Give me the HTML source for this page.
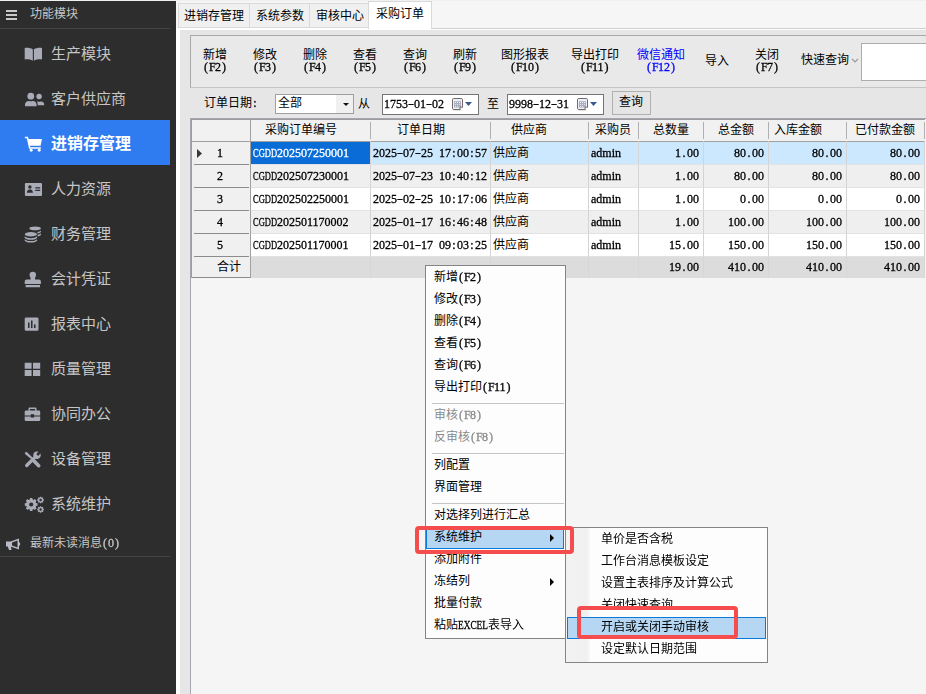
<!DOCTYPE html>
<html lang="zh-CN">
<head>
<meta charset="utf-8">
<title>采购订单</title>
<style>

*{box-sizing:border-box}
html,body{margin:0;padding:0}
html,body{width:926px;height:694px;overflow:hidden}
body{background:#e6e6e6;color:#000;font:12px/12px "Liberation Serif",serif}
#app{position:relative;width:926px;height:694px;overflow:hidden;background:#e6e6e6}
/* ---- text primitives ---- */
.tx{display:inline-flex;align-items:flex-start;height:12px;line-height:12px;white-space:nowrap;
  font:12px/12px "Liberation Serif",serif;vertical-align:top}
.tx .a{display:block;height:12px;line-height:12px;will-change:transform;position:relative;top:-1px;-webkit-text-stroke:.3px currentColor}
.tx .p{display:inline-block;width:6px;text-align:center;white-space:pre}
.tx .p.h{transform:scaleX(1.5)}
.tx .q{display:inline-block;white-space:nowrap}
.tx .q>span{display:inline-block;transform-origin:0 0}
.tx .c{display:block;flex:none;height:12px;line-height:12px;font:12px/12px "Liberation Sans","Noto Sans CJK SC",sans-serif;white-space:nowrap;position:relative;top:-1px}
.abs{position:absolute}
.topline{position:absolute;left:0;top:0;width:926px;height:1px;background:#f0f0f0;z-index:5}

/* ---- sidebar ---- */
.side{position:absolute;left:0;top:0;width:176px;height:694px;background:#2d2d2d;color:#c6c6c6}
.side .sh{position:absolute;left:0;top:0;width:170px;height:29px;border-bottom:1px solid #454545}
.side .sh .ic{position:absolute;left:6px;top:10px;fill:#cacaca}
.side .sh .tx{position:absolute;left:30px;top:9px}
.nav{position:absolute;left:0;top:30px;width:170px;margin:0;padding:0;list-style:none}
.nav li{position:relative;height:45px}
.nav li .ic{position:absolute;left:23px;top:14px;fill:#a9abb7}
.ic .st{fill:none;stroke:#a9abb7;stroke-linecap:round}
.nav li .ol{position:absolute;left:51px;top:16px;height:15px;font:15px/15px "Liberation Sans","Noto Sans CJK SC",sans-serif;white-space:nowrap}
.nav li.on{background:#2f7bf0;color:#fff}
.nav li.on .ol{top:16px;height:16px;font-size:16px;line-height:16px;font-weight:bold}
.nav li.on .ic{fill:#fff}
.side .msg{position:absolute;left:0;top:531px;width:170px;height:26px;border-bottom:1px solid #454545}
.side .msg .ic{position:absolute;left:5px;top:6px;fill:#b9bcc8}
.side .msg .tx{position:absolute;left:30px;top:7px}

/* ---- tab strip ---- */
.strip{position:absolute;left:176px;top:0;width:750px;height:28px;background:#f6f6f6}
.edge-t{position:absolute;left:176px;top:28px;width:750px;height:2px;background:#fff}
.edge-t:before{content:"";position:absolute;left:256px;right:0;top:0;height:1px;background:#d0d0d0}
.edge-l{position:absolute;left:176px;top:28px;width:4px;height:666px;background:#fff}
.tab{position:absolute;top:3px;height:25px;background:#f0f0f0;border:1px solid #d9d9d9;padding-top:7px}
.tab.on{top:1px;height:28px;background:#fff;border-bottom:0;padding-top:7px;z-index:2}

/* ---- toolbar ---- */
.toolbar{position:absolute;left:190px;top:35px;width:740px;height:53px;border:1px solid #a9a9a9;border-bottom-color:#c4c4c4;background:#e9e9e9}
.tb{position:absolute;text-align:center}
.tb .tx{display:flex;justify-content:center}
.tb.blue{color:#00f}
.qs{position:absolute;left:670px;top:7px;width:80px;height:38px;background:#fff;border:1px solid #adadad}

/* ---- filter row ---- */
.filter{position:absolute;left:190px;top:88px;width:736px;height:30px}
.filter>*{position:absolute}
.box{background:#fff;border:1px solid #747474;height:21px;top:6px}
.box.combo{border-color:#a0a0a0;height:20px}
.box.combo .tx{left:2px}
.box.date .tx{top:4px}
.box .tx{position:absolute;top:3px;left:1px}
.combo .dd{position:absolute;right:0;top:0;width:17px;height:18px;background:#f0f0f0}
.btn{background:#e5e5e5;border:1px solid #b0b0b0}

/* ---- grid ---- */
.grid{position:absolute;left:190px;top:118px;width:740px;height:580px;border:1px solid #a4a7ad;background:#f5f5f5}
table.g{position:absolute;left:0;top:0;border-collapse:separate;border-spacing:0;table-layout:fixed;width:734px;border-left:1px solid #9c9c9c;border-top:1px solid #9c9c9c}
table.g th,table.g td{padding:0;font-weight:normal;white-space:nowrap;overflow:hidden;text-align:left;vertical-align:top;border-right:1px solid #d4d4d4}
table.g th{height:22px;overflow:visible;background:#f1f1f1;border-bottom:1px solid #a0a0a0;border-right-color:transparent;padding-top:5px;position:relative}
table.g th:after{content:"";position:absolute;right:-1px;top:2px;bottom:2px;width:1px;background:#b0b0b0}
table.g th.ind:after{top:0;bottom:-1px;background:#a0a0a0}
table.g td{height:23px;padding:6px 0 0 2px;border-bottom:1px solid #e2e2e2;background:#fff}
table.g tr.alt td{background:#efefef}
table.g tr.sel td{background:#cce8ff}
table.g td.num{text-align:right;padding-right:4px;padding-left:0}
table.g td.ind,table.g tr.alt td.ind,table.g tr.sel td.ind,table.g tr.sum td.ind{background:#f0f0f0;border-right-color:#a0a0a0;border-bottom:0;position:relative;padding-left:25px}
table.g td.ind:after{content:"";position:absolute;left:2px;right:1px;bottom:0;height:1px;background:#8c8c8c}
table.g tr.sel td.cur{background:#0a6dd7;color:#fff}
table.g tr.sum td.ind:after{left:0;right:0}
table.g tr.sum td{height:21px;background:#dcdcdc;border-bottom:0;border-right-color:#d6d6d6;padding-top:5px}
.ptr{position:absolute;left:5px;top:7px}

/* ---- popup menus ---- */
.menu{position:absolute;background:#fdfdfd;border:1px solid #848484;margin:0;padding:1px 0 0;list-style:none}
.menu li{position:relative;height:22px;padding:5px 0 0 8px;margin-right:1px}
.menu li.sep{height:6px;padding:0}
.menu li.sep:after{content:"";position:absolute;left:6px;right:0;top:4px;height:1px;background:#c4c4c4}
.menu li.dis{color:#8a8a8a}
.menu li.hot{background:#b5d7f3;outline:1px solid #0a7ad8;outline-offset:-1px}
.menu li.more:after{content:"";position:absolute;left:124px;top:7px;border-left:4px solid #000;border-top:4px solid transparent;border-bottom:4px solid transparent}
.menu.sub{padding:1px 0;background:linear-gradient(90deg,#f2f2f2 0,#f0f0f0 21px,#fdfdfd 25px)}
.menu.sub li{padding-left:34px;margin:0 1px}
.mark{position:absolute;border:4px solid #f54d4d;border-radius:4px;z-index:9}

</style>
</head>
<body>
<div id="app">
<div class="topline"></div>
<div class="side">
<div class="sh"><svg class="ic" width="11" height="10" viewBox="0 0 11 10"><path d="M0 0h11v2H0zM0 4h11v2H0zM0 8h11v2H0z"/></svg><span class="tx"><span class="c">功能模块</span></span></div>
<ul class="nav">
<li><svg class="ic" width="22" height="20" viewBox="0 0 22 20"><path d="M1.7 3.9c2.9-.4 5.9.1 8.1 1.4v11.5c-2.2-1.3-5.2-1.7-8.1-1.4zM19 3.9c-2.9-.4-5.9.1-8.1 1.4v11.5c2.2-1.3 5.2-1.7 8.1-1.4z"/></svg><span class="ol">生产模块</span></li>
<li><svg class="ic" width="22" height="20" viewBox="0 0 22 20"><circle cx="7.8" cy="7.2" r="3.4"/><circle cx="16.1" cy="7.5" r="2.7"/><path d="M2 17.2v-1.7c0-2.1 1.7-3.6 3.7-3.6h.5c1 .5 2.2.5 3.2 0h.5c2 0 3.7 1.5 3.7 3.6v1.7zM14.7 16.2v-1.1c0-1-.3-1.9-.9-2.6h.9c.9.4 1.9.4 2.8 0h.6c1.7 0 3.1 1.2 3.1 2.8v.9z"/></svg><span class="ol">客户供应商</span></li>
<li class="on"><svg class="ic" width="22" height="20" viewBox="0 0 22 20"><path d="M1.9 2.7h3.1l.5 2.2H19l-1.4 6.8H7l.3 1.5h10.5v1.5H6.1L3.8 4.2H1.9z"/><circle cx="8.2" cy="16.2" r="1.45"/><circle cx="16.2" cy="16.2" r="1.45"/></svg><span class="ol">进销存管理</span></li>
<li><svg class="ic" width="22" height="20" viewBox="0 0 22 20"><path fill-rule="evenodd" d="M2.9 4H18a1 1 0 0 1 1 1v11a1 1 0 0 1-1 1H2.9a1 1 0 0 1-1-1V5a1 1 0 0 1 1-1zM6.9 6.3a1.7 1.7 0 1 0 0 3.4a1.7 1.7 0 1 0 0-3.4zM3.9 13.7c0-2 1.1-3.3 2.4-3.3c.4.2.8.2 1.2 0c1.3 0 2.4 1.3 2.4 3.3zM12.3 8.3h4.9v1.1h-4.9zM12.3 10.8h4.9v1.1h-4.9z"/></svg><span class="ol">人力资源</span></li>
<li><svg class="ic" width="22" height="20" viewBox="0 0 22 20"><ellipse cx="12.1" cy="4.4" rx="5.8" ry="1.9"/><path d="M14.4 7.9c1.5-.2 2.8-.7 3.5-1.4v1.6c-.7.7-2 1.2-3.5 1.4zM14.6 10.7c1.4-.2 2.6-.7 3.3-1.4v1.6c-.7.7-1.9 1.2-3.3 1.4z"/><ellipse cx="7.9" cy="10.2" rx="6.2" ry="2.2"/><path d="M1.7 12.3c1.2 1.2 3.5 1.9 6.2 1.9s5-.7 6.2-1.9v1.6c-1.2 1.2-3.5 1.9-6.2 1.9s-5-.7-6.2-1.9zM1.7 15.2c1.2 1.2 3.5 1.9 6.2 1.9s5-.7 6.2-1.9v1.5c-1.2 1.2-3.5 1.9-6.2 1.9s-5-.7-6.2-1.9z"/></svg><span class="ol">财务管理</span></li>
<li><svg class="ic" width="22" height="20" viewBox="0 0 22 20"><path d="M9.8 2.7c1.9 0 3.3 1.3 3.3 3c0 1.5-1.1 2.3-1.1 3.7v1.1h3.9c1.1 0 2 .9 2 2v2.5H1.7v-2.5c0-1.1.9-2 2-2h3.9V9.4c0-1.4-1.1-2.2-1.1-3.7c0-1.7 1.4-3 3.3-3zM2.6 16h14.4v2.2H2.6z"/></svg><span class="ol">会计凭证</span></li>
<li><svg class="ic" width="22" height="20" viewBox="0 0 22 20"><path fill-rule="evenodd" d="M3 3.6h11.2a1.3 1.3 0 0 1 1.3 1.3v10.6a1.3 1.3 0 0 1-1.3 1.3H3a1.3 1.3 0 0 1-1.3-1.3V4.9A1.3 1.3 0 0 1 3 3.6zM5 8.5v5.5h1.5V8.5zM8 6.5V14h1.5V6.5zM11 10.5V14h1.5v-3.5z"/></svg><span class="ol">报表中心</span></li>
<li><svg class="ic" width="22" height="20" viewBox="0 0 22 20"><path d="M1.7 3.8h6.9v5.9H1.7zM10 3.8h7.2v5.9H10zM1.7 11h6.9v6H1.7zM10 11h7.2v6H10z"/></svg><span class="ol">质量管理</span></li>
<li><svg class="ic" width="22" height="20" viewBox="0 0 22 20"><path fill-rule="evenodd" d="M6.5 3.6h6a1 1 0 0 1 1 1v1.9h2.5a1.2 1.2 0 0 1 1.2 1.2v3.8h-6.1v-1.2H7.8v1.2H1.7V7.7a1.2 1.2 0 0 1 1.2-1.2h2.6V4.6a1 1 0 0 1 1-1zM6.9 4.9v1.6h5.2V4.9zM1.7 12.6h6.1v1h3.3v-1h6.1v3.2a1.2 1.2 0 0 1-1.2 1.2H2.9a1.2 1.2 0 0 1-1.2-1.2z"/></svg><span class="ol">协同办公</span></li>
<li><svg class="ic" width="22" height="20" viewBox="0 0 22 20"><path d="M1.7 3.8l1.8-1.1l6 5.9l-1.3 1.3l-5.6-4.3z"/><path class="st" d="M10.3 11.3l5.4 5.4" stroke-width="3.6"/><path class="st" d="M3.7 16.5l7.6-7.6" stroke-width="3.2"/><path d="M17.44 4.59A3.8 3.8 0 1 1 15.61 2.76L13.3 5.1l1.8 1.8z"/></svg><span class="ol">设备管理</span></li>
<li><svg class="ic" width="22" height="20" viewBox="0 0 22 20"><path fill-rule="evenodd" d="M13.1 9.08L14.58 9.28L14.58 11.72L13.1 11.92L12.67 12.96L13.58 14.15L11.85 15.88L10.66 14.97L9.62 15.4L9.42 16.88L6.98 16.88L6.78 15.4L5.74 14.97L4.55 15.88L2.82 14.15L3.73 12.96L3.3 11.92L1.82 11.72L1.82 9.28L3.3 9.08L3.73 8.04L2.82 6.85L4.55 5.12L5.74 6.03L6.78 5.6L6.98 4.12L9.42 4.12L9.62 5.6L10.66 6.03L11.85 5.12L13.58 6.85L12.67 8.04zM6.1 10.5a2.1 2.1 0 1 0 4.2 0a2.1 2.1 0 1 0 -4.2 0z"/><path fill-rule="evenodd" d="M20.1 5.27L20.94 5.36L20.94 6.64L20.1 6.73L19.88 7.25L20.41 7.91L19.51 8.81L18.85 8.28L18.33 8.5L18.24 9.34L16.96 9.34L16.87 8.5L16.35 8.28L15.69 8.81L14.79 7.91L15.32 7.25L15.1 6.73L14.26 6.64L14.26 5.36L15.1 5.27L15.32 4.75L14.79 4.09L15.69 3.19L16.35 3.72L16.87 3.5L16.96 2.66L18.24 2.66L18.33 3.5L18.85 3.72L19.51 3.19L20.41 4.09L19.88 4.75zM16.4 6a1.2 1.2 0 1 0 2.4 0a1.2 1.2 0 1 0 -2.4 0z"/><path fill-rule="evenodd" d="M20.1 14.77L20.94 14.86L20.94 16.14L20.1 16.23L19.88 16.75L20.41 17.41L19.51 18.31L18.85 17.78L18.33 18L18.24 18.84L16.96 18.84L16.87 18L16.35 17.78L15.69 18.31L14.79 17.41L15.32 16.75L15.1 16.23L14.26 16.14L14.26 14.86L15.1 14.77L15.32 14.25L14.79 13.59L15.69 12.69L16.35 13.22L16.87 13L16.96 12.16L18.24 12.16L18.33 13L18.85 13.22L19.51 12.69L20.41 13.59L19.88 14.25zM16.4 15.5a1.2 1.2 0 1 0 2.4 0a1.2 1.2 0 1 0 -2.4 0z"/></svg><span class="ol">系统维护</span></li>
</ul>
<div class="msg"><svg class="ic" width="16" height="14" viewBox="0 0 16 14"><path fill-rule="evenodd" d="M1 4.5h4.5L14 1.4v11.2L5.5 9.5H1zM7 5.6v2.8l5.5 2V3.6zM2.8 9.5h3l.8 3.5H4z"/><path d="M14 5.5h1.1v3H14z"/></svg><span class="tx"><span class="c">最新未读消息</span><span class="a"><span class="p">(</span>0<span class="p">)</span></span></span></div>
</div>
<div class="strip"></div><div class="edge-t"></div><div class="edge-l"></div>
<div class="tab" style="left:178px;width:72px;padding-left:5px"><span class="tx"><span class="c">进销存管理</span></span></div>
<div class="tab" style="left:249px;width:61px;padding-left:6px"><span class="tx"><span class="c">系统参数</span></span></div>
<div class="tab" style="left:309px;width:60px;padding-left:6px"><span class="tx"><span class="c">审核中心</span></span></div>
<div class="tab on" style="left:368px;width:64px;padding-left:7px"><span class="tx"><span class="c">采购订单</span></span></div>
<div class="toolbar">
<div class="tb" style="left:12px;top:14px;width:24px"><span class="tx"><span class="c">新增</span></span><span class="tx"><span class="a"><span class="p">(</span><span class="p">F</span>2<span class="p">)</span></span></span></div>
<div class="tb" style="left:62px;top:14px;width:24px"><span class="tx"><span class="c">修改</span></span><span class="tx"><span class="a"><span class="p">(</span><span class="p">F</span>3<span class="p">)</span></span></span></div>
<div class="tb" style="left:112px;top:14px;width:24px"><span class="tx"><span class="c">删除</span></span><span class="tx"><span class="a"><span class="p">(</span><span class="p">F</span>4<span class="p">)</span></span></span></div>
<div class="tb" style="left:162px;top:14px;width:24px"><span class="tx"><span class="c">查看</span></span><span class="tx"><span class="a"><span class="p">(</span><span class="p">F</span>5<span class="p">)</span></span></span></div>
<div class="tb" style="left:212px;top:14px;width:24px"><span class="tx"><span class="c">查询</span></span><span class="tx"><span class="a"><span class="p">(</span><span class="p">F</span>6<span class="p">)</span></span></span></div>
<div class="tb" style="left:262px;top:14px;width:24px"><span class="tx"><span class="c">刷新</span></span><span class="tx"><span class="a"><span class="p">(</span><span class="p">F</span>9<span class="p">)</span></span></span></div>
<div class="tb" style="left:310px;top:14px;width:48px"><span class="tx"><span class="c">图形报表</span></span><span class="tx"><span class="a"><span class="p">(</span><span class="p">F</span>10<span class="p">)</span></span></span></div>
<div class="tb" style="left:380px;top:14px;width:48px"><span class="tx"><span class="c">导出打印</span></span><span class="tx"><span class="a"><span class="p">(</span><span class="p">F</span>11<span class="p">)</span></span></span></div>
<div class="tb blue" style="left:446px;top:14px;width:48px"><span class="tx"><span class="c">微信通知</span></span><span class="tx"><span class="a"><span class="p">(</span><span class="p">F</span>12<span class="p">)</span></span></span></div>
<div class="tb" style="left:514px;top:20px;width:24px"><span class="tx"><span class="c">导入</span></span></div>
<div class="tb" style="left:564px;top:14px;width:24px"><span class="tx"><span class="c">关闭</span></span><span class="tx"><span class="a"><span class="p">(</span><span class="p">F</span>7<span class="p">)</span></span></span></div>
<div class="tb" style="left:610px;top:19px;width:48px"><span class="tx"><span class="c">快速查询</span></span></div>
<svg class="abs" style="left:660px;top:22px" width="8" height="6" viewBox="0 0 8 6"><path d="M1 1l3 3 3-3" fill="none" stroke="#9a9a9a" stroke-width="1.2"/></svg>
<div class="qs"></div>
</div>
<div class="filter">
<span class="tx" style="left:14px;top:10px"><span class="c">订单日期</span><span class="a"><span class="p">:</span></span></span>
<div class="box combo" style="left:85px;width:79px"><span class="tx"><span class="c">全部</span></span><span class="dd"><svg class="abs" style="left:7px;top:8px" width="6" height="3" viewBox="0 0 6 3"><path d="M0 0h6L3 3z" fill="#111"/></svg></span></div>
<span class="tx" style="left:168px;top:11px"><span class="c">从</span></span>
<div class="box date" style="left:192px;width:97px"><span class="tx"><span class="a">1753<span class="p h">-</span>01<span class="p h">-</span>02</span></span><svg class="abs" style="left:69px;top:3px" width="21" height="13" viewBox="0 0 21 13"><path d="M1.5 12.3h8.5" stroke="#cfcfcf" stroke-width="1" opacity=".7"/><rect x=".5" y=".5" width="10" height="11" rx="1.2" fill="#eef1fa" stroke="#746868"/><path d="M2 3.2h7v6.3H2z" fill="#a9aebf"/><path d="M3 4.1h.9v.9H3zM5.1 4.1h.9v.9h-.9zM7.2 4.1h.9v.9h-.9zM3 6.2h.9v.9H3zM5.1 6.2h.9v.9h-.9zM7.2 6.2h.9v.9h-.9zM3 8.2h.9v.9H3zM5.1 8.2h.9v.9h-.9z" fill="#fff"/><path d="M11.2 8.8v3.4H7.8z" fill="#fff"/><path d="M8 11.7V9.2h2.7" fill="#eef1fa" stroke="#6f6363" stroke-width=".9"/><path d="M13 4h7l-3.5 4z" fill="#3d5a8f"/></svg></div>
<span class="tx" style="left:297px;top:11px"><span class="c">至</span></span>
<div class="box date" style="left:317px;width:97px"><span class="tx"><span class="a">9998<span class="p h">-</span>12<span class="p h">-</span>31</span></span><svg class="abs" style="left:69px;top:3px" width="21" height="13" viewBox="0 0 21 13"><path d="M1.5 12.3h8.5" stroke="#cfcfcf" stroke-width="1" opacity=".7"/><rect x=".5" y=".5" width="10" height="11" rx="1.2" fill="#eef1fa" stroke="#746868"/><path d="M2 3.2h7v6.3H2z" fill="#a9aebf"/><path d="M3 4.1h.9v.9H3zM5.1 4.1h.9v.9h-.9zM7.2 4.1h.9v.9h-.9zM3 6.2h.9v.9H3zM5.1 6.2h.9v.9h-.9zM7.2 6.2h.9v.9h-.9zM3 8.2h.9v.9H3zM5.1 8.2h.9v.9h-.9z" fill="#fff"/><path d="M11.2 8.8v3.4H7.8z" fill="#fff"/><path d="M8 11.7V9.2h2.7" fill="#eef1fa" stroke="#6f6363" stroke-width=".9"/><path d="M13 4h7l-3.5 4z" fill="#3d5a8f"/></svg></div>
<div class="btn" style="left:422px;top:3px;width:39px;height:24px"><span class="tx" style="position:absolute;left:6px;top:5px"><span class="c">查询</span></span></div>
</div>
<div class="grid">
<table class="g"><colgroup><col style="width:59px"><col style="width:120px"><col style="width:120px"><col style="width:98px"><col style="width:50px"><col style="width:65px"><col style="width:65px"><col style="width:78px"><col style="width:78px"></colgroup>
<thead><tr>
<th class="ind"></th>
<th style="padding-left:14px"><span class="tx"><span class="c">采购订单编号</span></span></th>
<th style="padding-left:26px"><span class="tx"><span class="c">订单日期</span></span></th>
<th style="padding-left:20px"><span class="tx"><span class="c">供应商</span></span></th>
<th style="padding-left:6px"><span class="tx"><span class="c">采购员</span></span></th>
<th style="padding-left:14px"><span class="tx"><span class="c">总数量</span></span></th>
<th style="padding-left:14px"><span class="tx"><span class="c">总金额</span></span></th>
<th style="padding-left:5px"><span class="tx"><span class="c">入库金额</span></span></th>
<th style="padding-left:8px"><span class="tx"><span class="c">已付款金额</span></span></th>
</tr></thead><tbody>
<tr class="sel">
<td class="ind"><svg class="ptr" width="5" height="9" viewBox="0 0 5 9"><path d="M0 0L5 4.5L0 9z" fill="#383838"/></svg><span class="tx"><span class="a">1</span></span></td>
<td class="cur"><span class="tx"><span class="a"><span class="q" style="width:24px"><span style="transform:scaleX(0.706)">CGDD</span></span>202507250001</span></span></td>
<td><span class="tx"><span class="a">2025<span class="p h">-</span>07<span class="p h">-</span>25<span class="p"> </span>17<span class="p">:</span>00<span class="p">:</span>57</span></span></td><td><span class="tx"><span class="c">供应商</span></span></td><td><span class="tx"><span class="a">admin</span></span></td>
<td class="num"><span class="tx"><span class="a">1<span class="p">.</span>00</span></span></td>
<td class="num"><span class="tx"><span class="a">80<span class="p">.</span>00</span></span></td>
<td class="num"><span class="tx"><span class="a">80<span class="p">.</span>00</span></span></td>
<td class="num"><span class="tx"><span class="a">80<span class="p">.</span>00</span></span></td>
</tr>
<tr class="alt">
<td class="ind"><span class="tx"><span class="a">2</span></span></td>
<td><span class="tx"><span class="a"><span class="q" style="width:24px"><span style="transform:scaleX(0.706)">CGDD</span></span>202507230001</span></span></td>
<td><span class="tx"><span class="a">2025<span class="p h">-</span>07<span class="p h">-</span>23<span class="p"> </span>10<span class="p">:</span>40<span class="p">:</span>12</span></span></td><td><span class="tx"><span class="c">供应商</span></span></td><td><span class="tx"><span class="a">admin</span></span></td>
<td class="num"><span class="tx"><span class="a">1<span class="p">.</span>00</span></span></td>
<td class="num"><span class="tx"><span class="a">80<span class="p">.</span>00</span></span></td>
<td class="num"><span class="tx"><span class="a">80<span class="p">.</span>00</span></span></td>
<td class="num"><span class="tx"><span class="a">80<span class="p">.</span>00</span></span></td>
</tr>
<tr class="">
<td class="ind"><span class="tx"><span class="a">3</span></span></td>
<td><span class="tx"><span class="a"><span class="q" style="width:24px"><span style="transform:scaleX(0.706)">CGDD</span></span>202502250001</span></span></td>
<td><span class="tx"><span class="a">2025<span class="p h">-</span>02<span class="p h">-</span>25<span class="p"> </span>10<span class="p">:</span>17<span class="p">:</span>06</span></span></td><td><span class="tx"><span class="c">供应商</span></span></td><td><span class="tx"><span class="a">admin</span></span></td>
<td class="num"><span class="tx"><span class="a">1<span class="p">.</span>00</span></span></td>
<td class="num"><span class="tx"><span class="a">0<span class="p">.</span>00</span></span></td>
<td class="num"><span class="tx"><span class="a">0<span class="p">.</span>00</span></span></td>
<td class="num"><span class="tx"><span class="a">0<span class="p">.</span>00</span></span></td>
</tr>
<tr class="alt">
<td class="ind"><span class="tx"><span class="a">4</span></span></td>
<td><span class="tx"><span class="a"><span class="q" style="width:24px"><span style="transform:scaleX(0.706)">CGDD</span></span>202501170002</span></span></td>
<td><span class="tx"><span class="a">2025<span class="p h">-</span>01<span class="p h">-</span>17<span class="p"> </span>16<span class="p">:</span>46<span class="p">:</span>48</span></span></td><td><span class="tx"><span class="c">供应商</span></span></td><td><span class="tx"><span class="a">admin</span></span></td>
<td class="num"><span class="tx"><span class="a">1<span class="p">.</span>00</span></span></td>
<td class="num"><span class="tx"><span class="a">100<span class="p">.</span>00</span></span></td>
<td class="num"><span class="tx"><span class="a">100<span class="p">.</span>00</span></span></td>
<td class="num"><span class="tx"><span class="a">100<span class="p">.</span>00</span></span></td>
</tr>
<tr class="">
<td class="ind"><span class="tx"><span class="a">5</span></span></td>
<td><span class="tx"><span class="a"><span class="q" style="width:24px"><span style="transform:scaleX(0.706)">CGDD</span></span>202501170001</span></span></td>
<td><span class="tx"><span class="a">2025<span class="p h">-</span>01<span class="p h">-</span>17<span class="p"> </span>09<span class="p">:</span>03<span class="p">:</span>25</span></span></td><td><span class="tx"><span class="c">供应商</span></span></td><td><span class="tx"><span class="a">admin</span></span></td>
<td class="num"><span class="tx"><span class="a">15<span class="p">.</span>00</span></span></td>
<td class="num"><span class="tx"><span class="a">150<span class="p">.</span>00</span></span></td>
<td class="num"><span class="tx"><span class="a">150<span class="p">.</span>00</span></span></td>
<td class="num"><span class="tx"><span class="a">150<span class="p">.</span>00</span></span></td>
</tr>
<tr class="sum"><td class="ind"><span class="tx"><span class="c">合计</span></span></td><td></td><td></td><td></td><td></td><td class="num"><span class="tx"><span class="a">19<span class="p">.</span>00</span></span></td><td class="num"><span class="tx"><span class="a">410<span class="p">.</span>00</span></span></td><td class="num"><span class="tx"><span class="a">410<span class="p">.</span>00</span></span></td><td class="num"><span class="tx"><span class="a">410<span class="p">.</span>00</span></span></td></tr>
</tbody></table>
</div>
<ul class="menu" style="left:425px;top:265px;width:141px;height:374px">
<li><span class="tx"><span class="c">新增</span><span class="a"><span class="p">(</span><span class="p">F</span>2<span class="p">)</span></span></span></li>
<li><span class="tx"><span class="c">修改</span><span class="a"><span class="p">(</span><span class="p">F</span>3<span class="p">)</span></span></span></li>
<li><span class="tx"><span class="c">删除</span><span class="a"><span class="p">(</span><span class="p">F</span>4<span class="p">)</span></span></span></li>
<li><span class="tx"><span class="c">查看</span><span class="a"><span class="p">(</span><span class="p">F</span>5<span class="p">)</span></span></span></li>
<li><span class="tx"><span class="c">查询</span><span class="a"><span class="p">(</span><span class="p">F</span>6<span class="p">)</span></span></span></li>
<li><span class="tx"><span class="c">导出打印</span><span class="a"><span class="p">(</span><span class="p">F</span>11<span class="p">)</span></span></span></li>
<li class="sep"></li>
<li class="dis"><span class="tx"><span class="c">审核</span><span class="a"><span class="p">(</span><span class="p">F</span>8<span class="p">)</span></span></span></li>
<li class="dis"><span class="tx"><span class="c">反审核</span><span class="a"><span class="p">(</span><span class="p">F</span>8<span class="p">)</span></span></span></li>
<li class="sep"></li>
<li><span class="tx"><span class="c">列配置</span></span></li>
<li><span class="tx"><span class="c">界面管理</span></span></li>
<li class="sep"></li>
<li><span class="tx"><span class="c">对选择列进行汇总</span></span></li>
<li class="hot more"><span class="tx"><span class="c">系统维护</span></span></li>
<li><span class="tx"><span class="c">添加附件</span></span></li>
<li class="more"><span class="tx"><span class="c">冻结列</span></span></li>
<li><span class="tx"><span class="c">批量付款</span></span></li>
<li><span class="tx"><span class="c">粘贴</span><span class="a"><span class="q" style="width:30px"><span style="transform:scaleX(0.775)">EXCEL</span></span></span><span class="c">表导入</span></span></li>
</ul>
<ul class="menu sub" style="left:565px;top:527px;width:203px;height:136px">
<li><span class="tx"><span class="c">单价是否含税</span></span></li>
<li><span class="tx"><span class="c">工作台消息模板设定</span></span></li>
<li><span class="tx"><span class="c">设置主表排序及计算公式</span></span></li>
<li><span class="tx"><span class="c">关闭快速查询</span></span></li>
<li class="hot"><span class="tx"><span class="c">开启或关闭手动审核</span></span></li>
<li><span class="tx"><span class="c">设定默认日期范围</span></span></li>
</ul>
<div class="mark" style="left:415px;top:526px;width:159px;height:28px"></div>
<div class="mark" style="left:577px;top:606px;width:161px;height:33px"></div>
</div>
</body>
</html>
